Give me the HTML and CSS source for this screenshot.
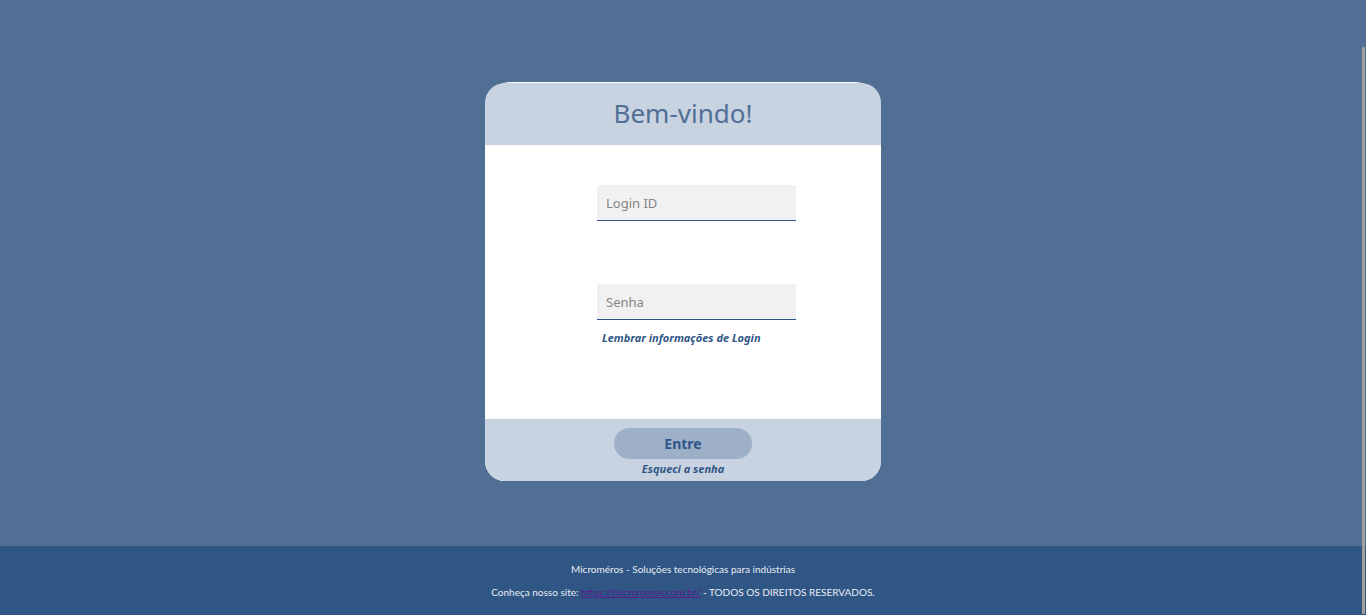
FILE: index.html
```html
<!DOCTYPE html>
<html lang="pt-BR">
<head>
<meta charset="utf-8">
<meta name="viewport" content="width=device-width, initial-scale=1">
<title>Microméros - Login</title>
<link rel="stylesheet" href="styles.css">
</head>
<body>
<main class="page">
  <form class="card">
    <header class="card-header"><h1 class="title">Bem-vindo!</h1></header>
    <div class="card-body">
      <input class="field" id="login" type="text" placeholder="Login ID" aria-label="Login ID">
      <input class="field" id="password" type="password" placeholder="Senha" aria-label="Senha">
      <button class="remember" type="button">Lembrar informações de Login</button>
    </div>
    <div class="card-footer">
      <button class="submit" type="submit">Entre</button>
      <a class="forgot" href="#">Esqueci a senha</a>
    </div>
  </form>
</main>
<footer class="site-footer">
  <p class="footer-line">Microméros - Soluções tecnológicas para indústrias</p>
  <p class="footer-line">Conheça nosso site: <a class="site-link" href="https://micromeros.com.br/">https://micromeros.com.br/</a> - TODOS OS DIREITOS RESERVADOS.</p>
</footer>
<div class="scroll-thumb" aria-hidden="true"></div>
</body>
</html>
```

FILE: styles.css
```css
* { box-sizing: border-box; }

body {
  display: flex;
  flex-direction: column;
  min-height: 100vh;
  margin: 0;
  background: #516f95;
  font-family: "Noto Sans", sans-serif;
}

.page {
  flex: 1;
  display: flex;
  justify-content: center;
  align-items: flex-start;
  padding: 82px 16px 65px;
}

.card {
  width: 100%;
  max-width: 396px;
  padding-top: 1px;
  border-radius: 26px 26px 20px 20px;
  background: #fff;
}

.card-header {
  padding: 12px 16px 14px;
  border-radius: 20px 20px 0 0;
  background: #c8d3e1;
  text-align: center;
}

.title {
  margin: 0;
  color: #516f95;
  font-size: 26px;
  font-weight: 400;
  line-height: 36px;
}

.card-body {
  display: flex;
  flex-direction: column;
  align-items: flex-start;
  padding: 40px 85px 72px 112px;
}

.field {
  width: 100%;
  height: 36px;
  margin-bottom: 63px;
  padding: 0 9px;
  border: 0;
  border-bottom: 1px solid #305686;
  border-radius: 0;
  background: #f1f1f1;
  color: #305686;
  font-family: inherit;
  font-size: 13px;
}

.field::placeholder { color: #858585; }

.field:nth-of-type(2) { margin-bottom: 9px; }

.remember,
.forgot {
  padding: 0;
  border: 0;
  background: none;
  color: #305686;
  font-family: inherit;
  font-size: 11px;
  font-style: italic;
  font-weight: 700;
  line-height: 18px;
  text-decoration: none;
  white-space: nowrap;
}

.remember { margin-left: 5px; }

.card-footer {
  display: flex;
  flex-direction: column;
  align-items: center;
  gap: 1px;
  padding: 9px 16px 3px;
  border-radius: 0 0 20px 20px;
  background: #c8d3e1;
}

.submit {
  width: 138px;
  height: 31px;
  padding: 0;
  border: 0;
  border-radius: 16px;
  background: #9eafc8;
  color: #305686;
  font-family: inherit;
  font-size: 14px;
  font-weight: 700;
}

.site-footer {
  padding: 12px 16px 11px;
  background: #305686;
  color: #e8edf3;
  font-family: Lato, "Noto Sans", sans-serif;
  text-align: center;
}

.footer-line {
  margin: 0;
  font-size: 10px;
  line-height: 23px;
}

.site-link { color: #551a8b; }

.scroll-thumb {
  position: fixed;
  top: 47px;
  right: 1px;
  bottom: 1px;
  width: 3px;
  border-radius: 1px;
  background: #a09f9c;
}
```
